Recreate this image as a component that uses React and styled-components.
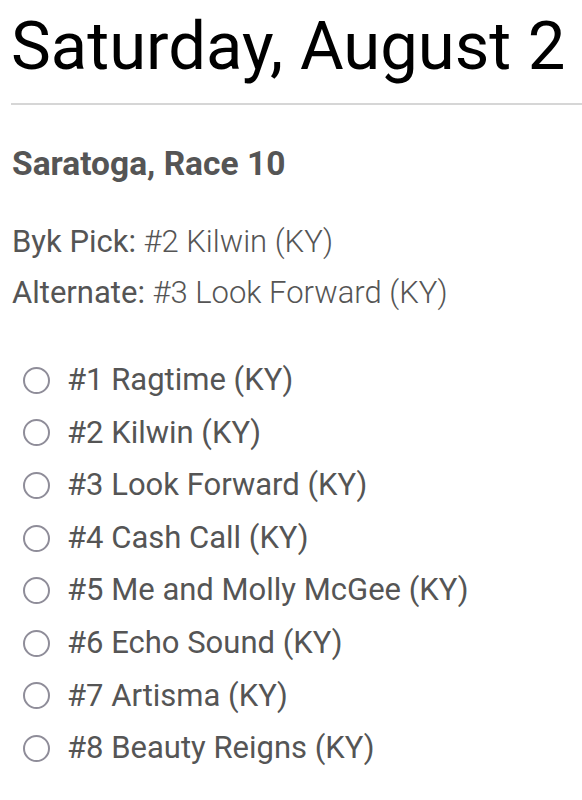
import React from 'react';
import styled, {createGlobalStyle} from 'styled-components';

const GlobalStyle = createGlobalStyle`
  html, body {
    margin: 0;
    padding: 0;
    background: #fff;
  }

  body {
    font-family: Roboto, 'Noto Sans', Arial, sans-serif;
  }
`;

const Page = styled.div`
  padding-left: 11px;
  padding-top: 6px;
`;

const Title = styled.h1`
  margin: 0;
  font-size: 67px;
  line-height: 80px;
  font-weight: 400;
  color: #000;
`;

const Divider = styled.hr`
  margin: 17px 0 0 0;
  border: none;
  height: 2px;
  background: #d6d6d6;
`;

const RaceName = styled.h3`
  margin: 39px 0 0 1px;
  font-size: 33.5px;
  line-height: 40px;
  font-weight: 700;
  color: #555;
`;

const Picks = styled.div`
  margin-top: 32px;
  margin-left: 1px;
`;

const PickLine = styled.p`
  margin: 0;
  font-size: 31px;
  line-height: 51px;
  color: #555;
  font-weight: 300;

  strong {
    font-weight: 400;
  }
`;

const Options = styled.ul`
  list-style: none;
  margin: 36px 0 0 0;
  padding: 0 0 0 12px;
`;

const Option = styled.li`
  display: flex;
  align-items: center;
  height: 52.6px;
`;

const Radio = styled.input`
  appearance: none;
  box-sizing: border-box;
  margin: 0 17px 0 0;
  width: 27px;
  height: 27px;
  border: 2px solid #8f8d99;
  border-radius: 50%;
  background: #fff;
  flex-shrink: 0;

  &:checked {
    border-color: #4a4a4a;
    background: radial-gradient(circle, #4a4a4a 0 6px, #fff 7px);
  }
`;

const OptionLabel = styled.label`
  font-size: 31px;
  line-height: 52.6px;
  color: #555;
`;

const horses = [
  '#1 Ragtime (KY)',
  '#2 Kilwin (KY)',
  '#3 Look Forward (KY)',
  '#4 Cash Call (KY)',
  '#5 Me and Molly McGee (KY)',
  '#6 Echo Sound (KY)',
  '#7 Artisma (KY)',
  '#8 Beauty Reigns (KY)',
];

export default function App() {
  const [selected, setSelected] = React.useState(null);

  return (
    <Page>
      <GlobalStyle />
      <Title>Saturday, August 2</Title>
      <Divider />
      <RaceName>Saratoga, Race 10</RaceName>
      <Picks>
        <PickLine>
          <strong>Byk Pick:</strong> #2 Kilwin (KY)
        </PickLine>
        <PickLine>
          <strong>Alternate:</strong> #3 Look Forward (KY)
        </PickLine>
      </Picks>
      <Options>
        {horses.map((horse, i) => (
          <Option key={horse}>
            <Radio
              type="radio"
              name="pick"
              id={`horse-${i}`}
              checked={selected === i}
              onChange={() => setSelected(i)}
            />
            <OptionLabel htmlFor={`horse-${i}`}>{horse}</OptionLabel>
          </Option>
        ))}
      </Options>
    </Page>
  );
}
